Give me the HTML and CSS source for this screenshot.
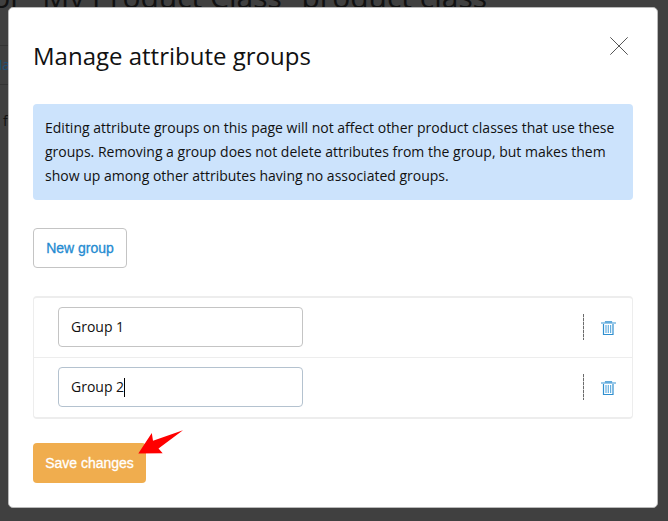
FILE: index.html
```html
<!DOCTYPE html>
<html lang="en">
<head>
<meta charset="utf-8">
<title>Manage attribute groups</title>
<link rel="stylesheet" href="styles.css">
</head>
<body>
<div class="page">
  <h1 class="page-title"><span>for "My Product Class" product class</span></h1>
  <div class="page-button"><span>Ma</span></div>
  <div class="page-note">f</div>
</div>
<main class="modal">
  <header class="modal-header">
    <h2>Manage attribute groups</h2>
    <svg class="close" viewBox="0 0 18 18" width="18" height="18"><path d="M.3.3 17.7 17.7M17.7.3.3 17.7"/></svg>
  </header>
  <p class="info">Editing attribute groups on this page will not affect other product classes that use these groups. Removing a group does not delete attributes from the group, but makes them show up among other attributes having no associated groups.</p>
  <button class="btn new">New group</button>
  <div class="list">
    <div class="row">
      <div class="field"><span>Group 1</span></div>
      <div class="remove">
        <svg class="trash" viewBox="0 0 15 15" width="15" height="15"><path class="lid" d="M0 2h15"/><path d="M4.5 1.5V.8h6v.7M2.5 3v10.5h9.5V3"/><path class="bars" d="M5 4v8M7.3 4v8M9.6 4v8"/></svg>
      </div>
    </div>
    <div class="row">
      <div class="field focused"><span>Group 2</span><i class="caret"></i></div>
      <div class="remove">
        <svg class="trash" viewBox="0 0 15 15" width="15" height="15"><path class="lid" d="M0 2h15"/><path d="M4.5 1.5V.8h6v.7M2.5 3v10.5h9.5V3"/><path class="bars" d="M5 4v8M7.3 4v8M9.6 4v8"/></svg>
      </div>
    </div>
  </div>
  <button class="btn save">Save changes</button>
</main>
<svg class="pointer" viewBox="0 0 46 26" width="46" height="26"><path d="M.3 23.5 13.8 3l1.2 7.8L45 .3 20.5 18.5l4.2 4.8z"/></svg>
</body>
</html>
```
FILE: styles.css
```css
* { box-sizing: border-box; }

body {
  margin: 0;
  width: 668px;
  height: 521px;
  overflow: hidden;
  position: relative;
  background: #404040;
  color: #111;
  font: 14px/24px "Open Sans", sans-serif;
}

.page { height: 521px; }

.page-title {
  display: flex;
  justify-content: flex-end;
  width: 487px;
  margin: -23px 0 0;
  white-space: nowrap;
  font-size: 30px;
  font-weight: 400;
  line-height: 40px;
}

.page-button {
  display: flex;
  align-items: center;
  justify-content: flex-end;
  width: 10px;
  height: 40px;
  margin-top: 28px;
  border: 1px solid #343434;
  border-width: 1px 0;
  color: #1a5178;
}

.page-note { margin: 24px 0 0 3px; }

.modal {
  position: absolute;
  left: 8px;
  top: 7px;
  width: 650px;
  height: 501px;
  padding: 24px;
  background: #fff;
  border: 1px solid #b9b9b9;
  border-radius: 5px;
}

.modal-header {
  display: flex;
  justify-content: space-between;
  height: 72px;
}

h2 {
  margin: 6px 0 0;
  font-size: 24px;
  font-weight: 400;
  line-height: 36px;
}

.close {
  margin: 5px 5px 0 0;
  fill: none;
  stroke: #555;
  stroke-width: 1;
}

.info {
  width: 600px;
  height: 96px;
  margin: 0 0 28px;
  padding: 12px;
  border-radius: 4px;
  background: #cce3fc;
}

.btn {
  display: block;
  height: 40px;
  margin: 0;
  padding: 0 12px;
  border: 0;
  border-radius: 4px;
  font: 14px/24px "Liberation Sans", Arial, sans-serif;
  -webkit-text-stroke: .3px;
}

.new {
  width: 94px;
  border: 1px solid #c4c4c4;
  background: #fff;
  color: #248bd1;
}

.save {
  width: 113px;
  padding: 0;
  background: #f0ad4e;
  color: #fff;
}

.list {
  width: 600px;
  height: 123px;
  margin: 28px 0 24px;
  border: 1px solid #ededed;
  border-width: 2px 1px;
  border-radius: 4px;
}

.row {
  display: flex;
  align-items: flex-start;
  justify-content: space-between;
  height: 59px;
  padding: 9px 0 0 24px;
}

.row + .row {
  height: 60px;
  border-top: 1px solid #ededed;
}

.field {
  display: flex;
  align-items: center;
  width: 245px;
  height: 40px;
  padding: 0 12px;
  border: 1px solid #c4c4c4;
  border-radius: 4px;
}

.focused { border-color: #b4c2cf; }

.caret {
  width: 1px;
  height: 19px;
  background: #000;
}

.remove {
  display: flex;
  align-items: flex-start;
  width: 49px;
  height: 26px;
  margin-top: 7px;
  padding: 7px 0 0 18px;
  background: repeating-linear-gradient(#6b6b6b 0 3px, #d0d0d0 3px 4px) left / 1px 26px no-repeat;
}

.trash {
  fill: none;
  stroke: #2e8fd0;
  stroke-width: 1.2;
}

.lid { stroke: #58a6da; }

.bars { stroke: #65aedf; }

.pointer {
  position: absolute;
  left: 138px;
  top: 430px;
  fill: #f00;
}
```
